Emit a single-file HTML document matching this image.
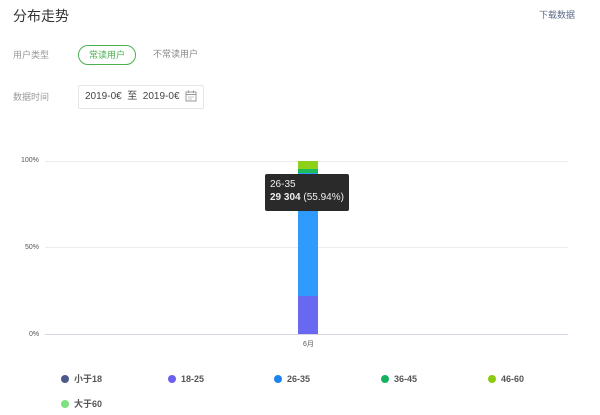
<!DOCTYPE html>
<html><head><meta charset="utf-8"><style>
body{margin:0;width:600px;height:415px;background:#fff;font-family:"Liberation Sans","Noto Sans CJK SC",sans-serif;position:relative;overflow:hidden;color:#333;line-height:1}
.a{position:absolute;white-space:nowrap;line-height:1}
.g{position:absolute;left:45px;width:523px;height:1px;background:#ececec}
.lg{position:absolute;font-size:9px;color:#555;font-weight:bold;line-height:10px;height:10px}
.lg i{display:inline-block;width:8px;height:8px;border-radius:50%;margin-right:5px;vertical-align:-1px}
</style></head><body>
<div class="a" style="left:13px;top:9px;font-size:14px;color:#333">分布走势</div>
<div class="a" style="left:539px;top:11px;font-size:9px;color:#5a6a8a">下载数据</div>
<div class="a" style="left:13px;top:51px;font-size:9px;color:#999">用户类型</div>
<div class="a" style="left:78px;top:45px;width:56px;height:18px;border:1px solid #4cb050;border-radius:10px;font-size:9px;color:#4cb050;display:flex;align-items:center;justify-content:center">常读用户</div>
<div class="a" style="left:153px;top:50px;font-size:9px;color:#888">不常读用户</div>
<div class="a" style="left:13px;top:93px;font-size:9px;color:#999">数据时间</div>
<div class="a" style="left:78px;top:85px;width:124px;height:22px;border:1px solid #e5e5e5;border-radius:2px"></div>
<div class="a" style="left:85px;top:92px;font-size:10px;color:#444">2019-0€&nbsp; 至&nbsp; 2019-0€</div>
<svg class="a" style="left:185px;top:90px" width="12" height="12" viewBox="0 0 12 12"><rect x="1" y="2" width="10" height="9" fill="none" stroke="#999"/><line x1="3.5" y1="0.5" x2="3.5" y2="3" stroke="#999"/><line x1="8.5" y1="0.5" x2="8.5" y2="3" stroke="#999"/><line x1="1" y1="4.5" x2="11" y2="4.5" stroke="#999"/><circle cx="4" cy="7" r=".6" fill="#999"/><circle cx="6" cy="7" r=".6" fill="#999"/><circle cx="8" cy="7" r=".6" fill="#999"/><circle cx="4" cy="9" r=".6" fill="#999"/><circle cx="6" cy="9" r=".6" fill="#999"/></svg>
<div class="g" style="top:161px"></div><div class="g" style="top:247px"></div><div class="g" style="top:334px;background:#d5d5e5"></div>
<div class="a" style="left:21px;top:157px;font-size:7px;color:#555">100%</div>
<div class="a" style="left:25px;top:244px;font-size:7px;color:#555">50%</div>
<div class="a" style="left:29px;top:331px;font-size:7px;color:#555">0%</div>
<div class="a" style="left:298px;top:161px;width:20px;height:8px;background:#8fd11a"></div>
<div class="a" style="left:298px;top:169px;width:20px;height:4px;background:#1dbd5a"></div>
<div class="a" style="left:298px;top:173px;width:20px;height:123px;background:#2f9bff"></div>
<div class="a" style="left:298px;top:296px;width:20px;height:38px;background:#6868f0"></div>
<div class="a" style="left:303px;top:341px;font-size:7px;color:#555">6月</div>
<div class="a" style="left:265px;top:174px;width:84px;height:37px;background:#2a2a2a;border-radius:2px"></div>
<div class="a" style="left:270px;top:180px;font-size:10px;color:#eee">26-35</div>
<div class="a" style="left:270px;top:193px;font-size:10px;color:#eee"><b>29 304</b> (55.94%)</div>
<div class="lg" style="left:61px;top:374px"><i style="background:#4a5a8a"></i>小于18</div>
<div class="lg" style="left:168px;top:374px"><i style="background:#6a60ee"></i>18-25</div>
<div class="lg" style="left:274px;top:374px"><i style="background:#1a84f0"></i>26-35</div>
<div class="lg" style="left:381px;top:374px"><i style="background:#17b060"></i>36-45</div>
<div class="lg" style="left:488px;top:374px"><i style="background:#8ccc10"></i>46-60</div>
<div class="lg" style="left:61px;top:399px"><i style="background:#7ee07e"></i>大于60</div>
</body></html>
